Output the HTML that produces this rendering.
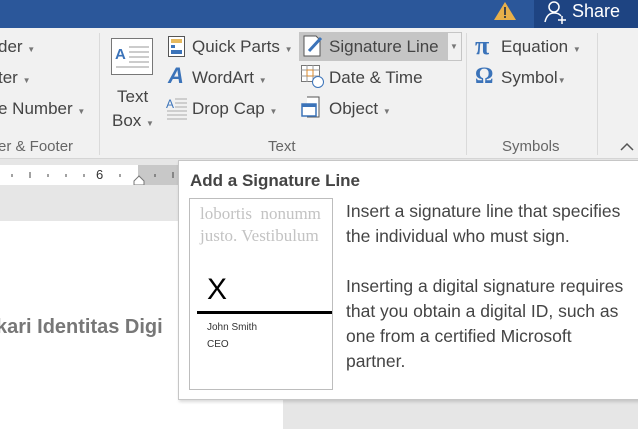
<!DOCTYPE html>
<html><head><meta charset="utf-8"><style>
*{margin:0;padding:0;box-sizing:border-box}
body{width:638px;height:429px;overflow:hidden;position:relative;background:#e6e6e6;font-family:"Liberation Sans",sans-serif;color:#444}
.a{position:absolute;white-space:nowrap}
.t{font-size:17px;color:#444}
.dd{font-size:8px;color:#777}
</style></head><body>
<div class="a" style="left:0;top:0;width:638px;height:28px;background:#2b579a"></div>
<div class="a" style="left:534px;top:0;width:104px;height:28px;background:#1e4482"></div>
<svg class="a" style="left:492px;top:0" width="26" height="22"><path d="M13 2 L24 20 L2 20 Z" fill="#e8b04a"/><rect x="12" y="7" width="2" height="8" fill="#444"/><rect x="12" y="16" width="2" height="2" fill="#444"/></svg>
<svg class="a" style="left:542px;top:0" width="28" height="24"><circle cx="12" cy="7" r="5" fill="none" stroke="#fff" stroke-width="1.5"/><path d="M3 22 Q5 13 12 13 Q17 13 19 16" fill="none" stroke="#fff" stroke-width="1.5"/><path d="M20 16v8M16 20h8" stroke="#fff" stroke-width="1.5"/></svg>
<div class="a" style="left:572px;top:1px;font-size:18px;color:#fff">Share</div>

<div class="a" style="left:0;top:28px;width:638px;height:131px;background:#f1f1f1;border-bottom:1px solid #d5d5d5"></div>
<div class="a t" style="left:-2px;top:37px">der <span class="dd">▼</span></div>
<div class="a t" style="left:-2px;top:68px">ter <span class="dd">▼</span></div>
<div class="a t" style="left:-2px;top:99px">e Number <span class="dd">▼</span></div>
<div class="a" style="left:-2px;top:138px;font-size:15px;color:#666">er &amp; Footer</div>
<div class="a" style="left:99px;top:33px;width:1px;height:122px;background:#dadada"></div>
<svg class="a" style="left:111px;top:38px" width="44" height="38"><rect x="0.5" y="0.5" width="41" height="36" fill="#fff" stroke="#777"/><text x="4" y="21" font-size="15" font-weight="bold" fill="#3b73b9" font-family="Liberation Sans">A</text><path d="M18 9h20M18 14h20M18 19h20M18 24h20M5 29h33" stroke="#999"/></svg>
<div class="a t" style="left:117px;top:87px">Text</div>
<div class="a t" style="left:112px;top:111px">Box <span class="dd">▼</span></div>
<svg class="a" style="left:168px;top:36px" width="18" height="22"><rect x="0.5" y="0.5" width="16" height="20" fill="#fff" stroke="#555"/><rect x="3" y="3" width="11" height="4" fill="#e6b95e"/><rect x="3" y="9" width="4" height="3" fill="#3b73b9"/><rect x="3" y="14" width="11" height="4" fill="#3b73b9"/></svg>
<div class="a t" style="left:192px;top:37px">Quick Parts <span class="dd">▼</span></div>
<div class="a" style="left:168px;top:63px;font-size:22px;font-style:italic;font-weight:bold;color:#3b73b9">A</div>
<div class="a t" style="left:192px;top:68px">WordArt <span class="dd">▼</span></div>
<svg class="a" style="left:166px;top:96px" width="22" height="24"><text x="0" y="12" font-size="12" fill="#3b73b9" font-family="Liberation Sans">A</text><path d="M9 3h12M9 7h12M9 11h12M1 15h20M1 19h20M1 23h20" stroke="#aaa"/></svg>
<div class="a t" style="left:192px;top:99px">Drop Cap <span class="dd">▼</span></div>
<div class="a" style="left:268px;top:138px;font-size:15px;color:#666">Text</div>
<div class="a" style="left:299px;top:32px;width:148px;height:29px;background:#c5c5c5"></div>
<div class="a" style="left:447px;top:32px;width:15px;height:29px;border:1px solid #c5c5c5;background:#f1f1f1"></div>
<div class="a dd" style="left:450px;top:42px">▼</div>
<svg class="a" style="left:303px;top:35px" width="22" height="22"><path d="M1 1h12l4 4v16H1z" fill="#fff" stroke="#555"/><path d="M6 16 L18 3" stroke="#3b73b9" stroke-width="3"/></svg>
<div class="a t" style="left:329px;top:37px">Signature Line</div>
<svg class="a" style="left:301px;top:65px" width="24" height="24"><rect x="0.5" y="0.5" width="18" height="16" fill="#fff" stroke="#777"/><path d="M0 5h19M6 0v17M12 0v17M0 11h19" stroke="#999"/><rect x="6" y="5" width="6" height="6" fill="none" stroke="#d88a2e"/><circle cx="17" cy="17" r="5.5" fill="#fff" stroke="#3b73b9"/></svg>
<div class="a t" style="left:329px;top:68px">Date &amp; Time</div>
<svg class="a" style="left:301px;top:96px" width="24" height="24"><path d="M6 1h12v20H6" fill="#fff" stroke="#555"/><rect x="1" y="8" width="14" height="12" fill="#fff" stroke="#3b73b9" stroke-width="1.5"/><rect x="1" y="8" width="14" height="3" fill="#3b73b9"/></svg>
<div class="a t" style="left:329px;top:99px">Object <span class="dd">▼</span></div>
<div class="a" style="left:466px;top:33px;width:1px;height:122px;background:#dadada"></div>
<div class="a" style="left:475px;top:31px;font-size:26px;font-weight:bold;color:#3b73b9;font-family:'Liberation Serif',serif">π</div>
<div class="a t" style="left:501px;top:37px">Equation <span class="dd">▼</span></div>
<div class="a" style="left:475px;top:63px;font-size:23px;font-weight:bold;color:#3b73b9;font-family:'Liberation Serif',serif">Ω</div>
<div class="a t" style="left:501px;top:68px">Symbol<span class="dd">▼</span></div>
<div class="a" style="left:502px;top:138px;font-size:15px;color:#666">Symbols</div>
<div class="a" style="left:597px;top:33px;width:1px;height:122px;background:#dadada"></div>
<svg class="a" style="left:620px;top:142px" width="14" height="10"><path d="M1 8 L7 2 L13 8" fill="none" stroke="#555" stroke-width="1.5"/></svg>

<div class="a" style="left:0;top:165px;width:138px;height:20px;background:#fff"></div>
<div class="a" style="left:138px;top:165px;width:60px;height:20px;background:#c8c8c8"></div>
<svg class="a" style="left:0;top:165px" width="200" height="20"><path d="M12 9v3M30 7v6M48 9v3M66 9v3M84 9v3M120 9v3M155 9v3M173 7v6" stroke="#444"/><path d="M134 20v-4l5-5 5 5v4z" fill="#fff" stroke="#777"/></svg>
<div class="a" style="left:96px;top:167px;font-size:13px;color:#333">6</div>
<div class="a" style="left:0;top:221px;width:283px;height:208px;background:#fff"></div>
<div class="a" style="left:-4px;top:316px;font-size:20px;font-weight:bold;color:#777">kari Identitas Digi</div>

<div class="a" style="left:178px;top:160px;width:462px;height:240px;background:#fff;border:1px solid #c6c6c6;box-shadow:1px 2px 3px rgba(0,0,0,.15)"></div>
<div class="a" style="left:190px;top:171px;font-size:17px;font-weight:bold;color:#444">Add a Signature Line</div>
<div class="a" style="left:189px;top:198px;width:144px;height:192px;border:1px solid #bdbdbd;background:#fff;overflow:hidden">
<div style="position:absolute;left:10px;top:4px;font-family:'Liberation Serif',serif;font-size:17px;color:#c3c3c3;line-height:22px;white-space:nowrap">lobortis&nbsp; nonumm<br>justo. Vestibulum</div>
<div style="position:absolute;left:17px;top:74px;font-size:30px;color:#000">X</div>
<div style="position:absolute;left:7px;top:112px;width:140px;height:3px;background:#000"></div>
<div style="position:absolute;left:17px;top:120px;font-size:10px;color:#333;line-height:17px">John Smith<br>CEO</div>
</div>
<div class="a" style="left:346px;top:199px;font-size:17.5px;color:#444;line-height:25px">Insert a signature line that specifies<br>the individual who must sign.<br><br>Inserting a digital signature requires<br>that you obtain a digital ID, such as<br>one from a certified Microsoft<br>partner.</div>
</body></html>
